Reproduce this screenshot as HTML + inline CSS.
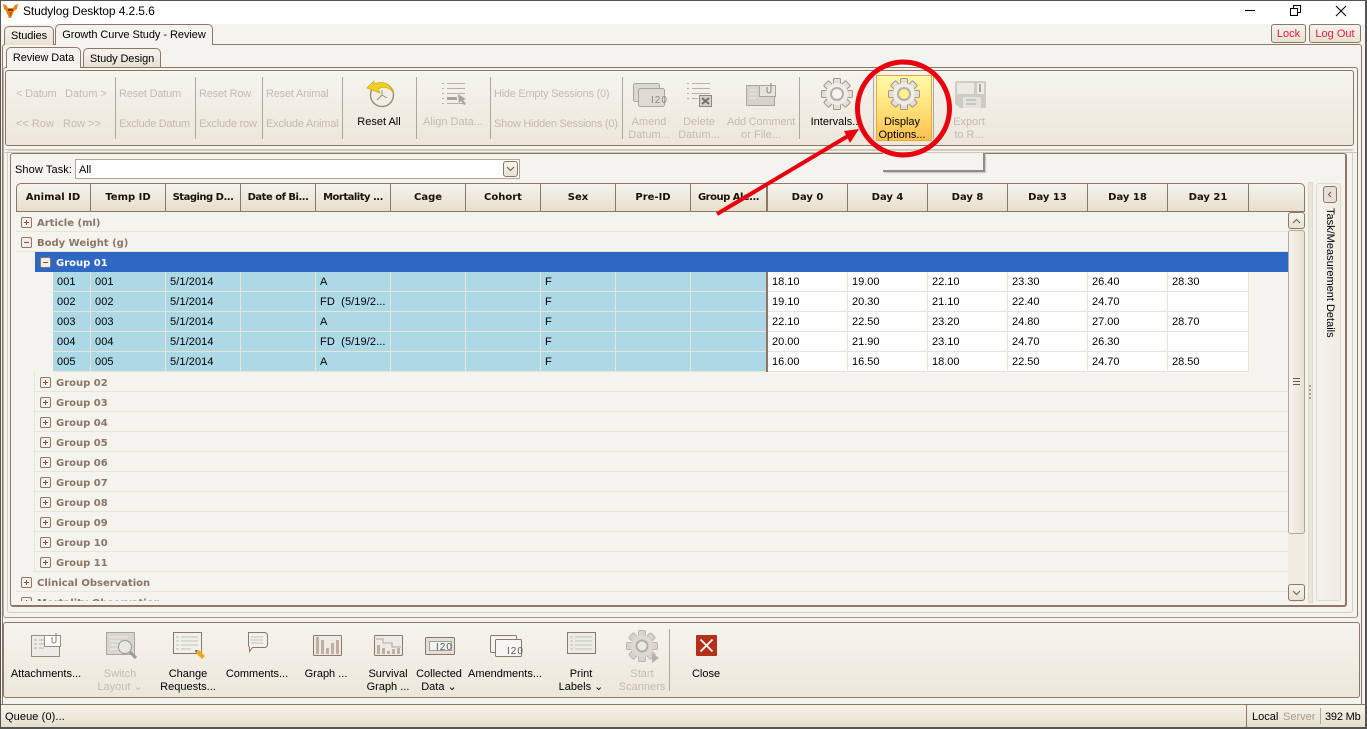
<!DOCTYPE html>
<html><head><meta charset="utf-8"><style>
html,body{margin:0;padding:0;width:1367px;height:729px;overflow:hidden;background:#f5f3ee}
body{position:relative;font:11px/14px "Liberation Sans",sans-serif;color:#000}
.a,.t,svg{position:absolute}
.t{white-space:nowrap;margin-top:1px}
.c{transform:translateX(-50%)}
.d{color:#c2bcb2}
.n{letter-spacing:-.2px}
.sep{position:absolute;width:1px;background:#b3a597}
.tab{position:absolute;box-sizing:border-box;border:1px solid #8e7767;border-bottom:0;border-radius:5px 5px 0 0;text-align:center;line-height:19px;background:linear-gradient(#f6f4ef,#e8e2d2)}
.on{background:#f5f3ee;line-height:21px}
.btn{position:absolute;box-sizing:border-box;border:1px solid #8e7767;border-radius:3px;background:linear-gradient(#f6f4ef,#e8e2d2);color:#f0143c;text-align:center;line-height:19px;font-size:11px}
.box{position:absolute;box-sizing:border-box;border:1px solid #8e7767;border-radius:3px}
.h{position:absolute;top:184px;height:27px;box-sizing:border-box;border-right:1px solid #8e7767;font:bold 10px/27px "DejaVu Sans",sans-serif;text-align:center;color:#1a1208;overflow:hidden;white-space:nowrap}
.e{letter-spacing:-.5px}
.g{position:absolute;height:20px;box-sizing:border-box;border-bottom:1px solid #e7e4da;font:bold 10px/24px "DejaVu Sans",sans-serif;color:#8b7565;white-space:nowrap;overflow:hidden}
.g i{position:absolute;box-sizing:border-box;width:11px;height:11px;top:5px;border:1px solid #8e7767;border-radius:2px;background:#f3efe6}
.g i:before{content:"";position:absolute;left:2px;top:4px;width:5px;height:1px;background:#6b5a4c}
.g i.p:after{content:"";position:absolute;left:4px;top:2px;width:1px;height:5px;background:#6b5a4c}
.row{position:absolute;left:53px;height:20px;width:1196px;white-space:nowrap}
.row span{position:absolute;top:0;height:20px;box-sizing:border-box;padding-left:4px;line-height:20px;border-right:1px solid #e7e4da;border-bottom:1px solid #e7e4da;background:#add8e6;letter-spacing:.1px;overflow:hidden}
.row span.w{background:#fff;padding-left:4px;letter-spacing:0}
.s0{left:0;width:38px}.s1{left:38px;width:75px}.s2{left:113px;width:75px}.s3{left:188px;width:75px}.s4{left:263px;width:75px}.s5{left:338px;width:75px}.s6{left:413px;width:75px}.s7{left:488px;width:75px}.s8{left:563px;width:75px}.s9{left:638px;width:76px}
.w0{left:715px;width:80px}.w1{left:795px;width:80px}.w2{left:875px;width:80px}.w3{left:955px;width:80px}.w4{left:1035px;width:80px}.w5{left:1115px;width:81px}
</style></head><body>
<!-- window frame -->
<div class="a" style="left:0;top:0;width:1367px;height:24px;background:#fff"></div>
<div class="a" style="left:0;top:0;width:1367px;height:1px;background:#555"></div>
<div class="a" style="left:0;top:0;width:1px;height:729px;background:#555"></div>
<div class="a" style="left:1365px;top:0;width:2px;height:729px;background:#555"></div>
<div class="a" style="left:0;top:727px;width:1367px;height:2px;background:#555"></div>
<svg style="left:2px;top:3px" width="17" height="16" viewBox="0 0 17 16"><path d="M1 1l3 1 2 3h5l2-3 3-1-1 5-3 2-3 7h-2L4 8 2 6z" fill="#e8820e"/><path d="M6 6h5v2H6z" fill="#7a3b10"/><path d="M7 9h3l-1 4h-1z" fill="#c9501a"/></svg>
<div class="t" style="left:23px;top:3px;font-size:12px;letter-spacing:-.1px">Studylog Desktop 4.2.5.6</div>
<svg style="left:1240px;top:0" width="125" height="20"><path d="M 5 10.500 H 15" stroke="#000" fill="none"/><path d="M50.500 8.500h7v7h-7zM53.500 8.500v-3h7v7h-3" stroke="#000" fill="none"/><path d="M96 6l10 10M106 6l-10 10" stroke="#000" fill="none"/></svg>

<!-- outer panes -->
<div class="a" style="left:2px;top:44px;width:1360px;height:660px;box-sizing:border-box;border:1px solid #8e7767;border-bottom:0;border-radius:3px 3px 0 0"></div>
<div class="a" style="left:3px;top:67px;width:1355px;height:551px;box-sizing:border-box;border:1px solid #8e7767;border-bottom:1px solid #a89a8b;border-left-color:#b9ab9c;border-radius:3px"></div>
<div class="tab" style="left:4px;top:26px;width:50px;height:19px;letter-spacing:-.1px">Studies</div>
<div class="tab on" style="left:55px;top:24px;width:158px;height:21px;letter-spacing:-.05px">Growth Curve Study - Review</div>
<div class="btn" style="left:1271px;top:24px;width:35px;height:19px">Lock</div>
<div class="btn" style="left:1309px;top:24px;width:52px;height:19px">Log Out</div>
<div class="tab on" style="left:6px;top:47px;width:75px;height:21px;letter-spacing:-.1px">Review Data</div>
<div class="tab" style="left:83px;top:48px;width:78px;height:19px;letter-spacing:-.1px;line-height:20px">Study Design</div>

<!-- top toolbar -->
<div class="box" style="left:5px;top:70px;width:1349px;height:76px;background:linear-gradient(#f6f4ef,#ece7da)"></div>
<div class="a" style="left:5px;top:149px;width:1349px;height:1px;background:#cfc7b8"></div>
<div class="sep" style="left:115px;top:77px;height:62px"></div>
<div class="sep" style="left:195px;top:77px;height:62px"></div>
<div class="sep" style="left:262px;top:77px;height:62px"></div>
<div class="sep" style="left:342px;top:77px;height:62px"></div>
<div class="sep" style="left:416px;top:77px;height:62px"></div>
<div class="sep" style="left:490px;top:77px;height:62px"></div>
<div class="sep" style="left:622px;top:77px;height:62px"></div>
<div class="sep" style="left:799px;top:77px;height:62px"></div>
<div class="sep" style="left:873px;top:77px;height:62px"></div>
<div class="sep" style="left:933px;top:77px;height:62px"></div>
<div class="t d n" style="left:16px;top:86px">&lt; Datum</div>
<div class="t d" style="left:65px;top:86px">Datum &gt;</div>
<div class="t d" style="left:16px;top:116px">&lt;&lt; Row</div>
<div class="t d" style="left:63px;top:116px">Row &gt;&gt;</div>
<div class="t d n" style="left:119px;top:86px">Reset Datum</div>
<div class="t d" style="left:119px;top:116px;letter-spacing:-.3px">Exclude Datum</div>
<div class="t d n" style="left:199px;top:86px">Reset Row</div>
<div class="t d n" style="left:199px;top:116px">Exclude row</div>
<div class="t d n" style="left:266px;top:86px">Reset Animal</div>
<div class="t d n" style="left:266px;top:116px">Exclude Animal</div>
<div class="t c" style="left:379px;top:114px">Reset All</div>
<svg style="left:364px;top:78px" width="32" height="30" viewBox="0 0 32 30"><circle cx="18" cy="17" r="11.500" fill="#f4efe4" stroke="#a08d7d" stroke-width="1.500"/><path d="M18 17V12M18 17l-5 5M18 17l5 3" stroke="#a08d7d" fill="none"/><path d="M3 10l7-7v3c7-3 16-2 19 8-5-5-10-6-15-3l2 4z" fill="#f3d01e" stroke="#c9a514" stroke-width=".7"/></svg>
<svg style="left:441px;top:82px" width="27" height="24" fill="none" stroke="#b8b2a9"><path d="M1 1.500h2M6 1.500h18M1 6.500h2M6 6.500h18M1 11.500h2M6 11.500h18M1 16.500h2M1 21.500h2M6 21.500h18"/><path d="M6 15h10v3H6z" fill="#a8a39b" stroke="none"/><path d="M17 12l8 5-3 1 3 4-2 1-3-4-2 2z" fill="#a8a39b" stroke="none"/></svg>
<div class="t d c" style="left:453px;top:114px">Align Data...</div>
<div class="t d" style="left:494px;top:86px;letter-spacing:-.25px">Hide Empty Sessions (0)</div>
<div class="t d" style="left:494px;top:116px;letter-spacing:-.25px">Show Hidden Sessions (0)</div>
<svg style="left:632px;top:83px" width="35" height="24"><rect x="1.500" y=".5" width="26" height="18" rx="2" fill="#dcd9d3" stroke="#aaa59d"/><rect x="6.500" y="5.500" width="26" height="18" rx="2" fill="#dedbd5" stroke="#aaa59d"/><text x="19" y="20" font-size="10" fill="#8b877f" font-family="Liberation Sans" letter-spacing="1">I20</text></svg>
<div class="t d c" style="left:649px;top:114px">Amend</div><div class="t d c" style="left:649px;top:127px">Datum...</div>
<svg style="left:686px;top:82px" width="27" height="26" fill="none" stroke="#b8b2a9"><path d="M1 1.500h2M6 1.500h18M1 6.500h2M6 6.500h18M1 11.500h2M6 11.500h18M1 16.500h2M6 16.500h6"/><rect x="13.500" y="13.500" width="12" height="11" fill="#d5d2cb" stroke="#8e8a83"/><path d="M16 16l7 6M23 16l-7 6" stroke="#77736c" stroke-width="2"/></svg>
<div class="t d c" style="left:699px;top:114px">Delete</div><div class="t d c" style="left:699px;top:127px">Datum...</div>
<svg style="left:745px;top:82px" width="33" height="25"><rect x="1.500" y="3.500" width="28" height="20" fill="#d6d3cc" stroke="#aaa59d"/><path d="M5 8h6M5 12h6M5 16h6" stroke="#f0eee9"/><rect x="14.500" y="3.500" width="16" height="11" fill="#e6e4df" stroke="#aaa59d"/><path d="M26 1v8a2 2 0 0 1-4 0V5" fill="none" stroke="#88837b"/></svg>
<div class="t d c n" style="left:761px;top:114px">Add Comment</div><div class="t d c" style="left:761px;top:127px">or File...</div>
<div class="a" style="left:876px;top:75px;width:56px;height:66px;box-sizing:border-box;border:1px solid #e8a63c;background:linear-gradient(#fff9a8,#ffe27a 50%,#fdc04e)"></div>
<svg style="left:820px;top:77px" width="34" height="34" viewBox="-17 -17 34 34"><g fill="#e4dfd8" stroke="#a3968a"><rect x="-3.500" y="-15.500" width="7" height="31" rx="1"/><rect x="-3.500" y="-15.500" width="7" height="31" rx="1" transform="rotate(45)"/><rect x="-3.500" y="-15.500" width="7" height="31" rx="1" transform="rotate(90)"/><rect x="-3.500" y="-15.500" width="7" height="31" rx="1" transform="rotate(135)"/></g><circle r="11" fill="#f0ede8"/><circle r="6" fill="#f6f4f0" stroke="#b8aea3" stroke-width="2"/></svg>
<svg style="left:887px;top:77px" width="34" height="34" viewBox="-17 -17 34 34"><g fill="#e4dfd8" stroke="#a3968a"><rect x="-3.500" y="-15.500" width="7" height="31" rx="1"/><rect x="-3.500" y="-15.500" width="7" height="31" rx="1" transform="rotate(45)"/><rect x="-3.500" y="-15.500" width="7" height="31" rx="1" transform="rotate(90)"/><rect x="-3.500" y="-15.500" width="7" height="31" rx="1" transform="rotate(135)"/></g><circle r="11" fill="#f0ede8"/><circle r="6" fill="#fff08a" stroke="#b8aea3" stroke-width="2"/></svg>
<div class="t c" style="left:836px;top:114px">Intervals...</div>
<div class="t c" style="left:902px;top:114px">Display</div><div class="t c" style="left:902px;top:127px">Options...</div>
<svg style="left:954px;top:80px" width="33" height="29"><path d="M1 3a2 2 0 0 1 2-2h27a2 2 0 0 1 2 2v25H6l-5-4z" fill="#cfccc5"/><rect x="3" y="3" width="17" height="11" fill="#ebe9e4"/><rect x="23" y="3" width="7" height="11" fill="#eeece7"/><rect x="25" y="4" width="2" height="8" fill="#aaa69e"/><rect x="9" y="17" width="18" height="11" fill="#e4e2dc"/><path d="M12 20h10M12 24h10" stroke="#aaa69e"/></svg>
<div class="t d c" style="left:969px;top:114px">Export</div><div class="t d c" style="left:969px;top:127px">to R...</div>

<!-- main grid panel -->
<div class="a" style="left:3px;top:152px;width:1354px;height:1px;background:#cfc7b8"></div>
<div class="a" style="left:7px;top:150px;width:1346px;height:463px;box-sizing:border-box;border:1px solid #d5cdbf;border-radius:3px"></div>
<div class="a" style="left:10px;top:153px;width:1337px;height:454px;box-sizing:border-box;border:1px solid #8e7767;border-right-width:2px;border-bottom-width:2px;border-radius:3px;background:#f5f3ee"></div>
<div class="a" style="left:883px;top:153px;width:102px;height:19px;background:#f5f3ee;border-right:2px solid #8c8c8c;border-bottom:2px solid #8c8c8c;box-sizing:border-box;box-shadow:1px 1px 1px #c8c4bc"></div>
<div class="t" style="left:15px;top:162px;letter-spacing:.1px">Show Task:</div>
<div class="a" style="left:75px;top:159px;width:445px;height:20px;box-sizing:border-box;border:1px solid #b3a597;background:#fff"></div>
<div class="t" style="left:79px;top:162px">All</div>
<div class="box" style="left:503px;top:161px;width:15px;height:16px;background:linear-gradient(#f6f4ef,#e8e2d2)"></div>
<svg style="left:506px;top:166px" width="9" height="6" fill="none" stroke="#6b5a4c"><path d="M1 1l3.500 3.500L8 1"/></svg>

<!-- header -->
<div class="a" style="left:16px;top:183px;width:1289px;height:29px;box-sizing:border-box;border:1px solid #8e7767;border-left-width:1px;border-radius:5px 5px 0 0;background:linear-gradient(#f6f4ef,#e6dfcd)"></div>
<div class="h" style="left:16px;width:75px">Animal ID</div>
<div class="h" style="left:91px;width:75px">Temp ID</div>
<div class="h e" style="left:166px;width:75px">Staging D...</div>
<div class="h e" style="left:241px;width:75px">Date of Bi...</div>
<div class="h e" style="left:316px;width:75px">Mortality ...</div>
<div class="h" style="left:391px;width:75px">Cage</div>
<div class="h" style="left:466px;width:75px">Cohort</div>
<div class="h" style="left:541px;width:75px">Sex</div>
<div class="h" style="left:616px;width:75px">Pre-ID</div>
<div class="h e" style="left:691px;width:77px;border-right-width:2px">Group Ale...</div>
<div class="h" style="left:768px;width:80px">Day 0</div>
<div class="h" style="left:848px;width:80px">Day 4</div>
<div class="h" style="left:928px;width:80px">Day 8</div>
<div class="h" style="left:1008px;width:80px">Day 13</div>
<div class="h" style="left:1088px;width:80px">Day 18</div>
<div class="h" style="left:1168px;width:81px">Day 21</div>

<!-- rows -->
<div class="g" style="left:16px;top:212px;width:1272px;padding-left:21px"><i class="p" style="left:5px"></i>Article (ml)</div>
<div class="g" style="left:16px;top:232px;width:1272px;padding-left:21px"><i style="left:5px"></i>Body Weight (g)</div>
<div class="a" style="left:35px;top:252px;width:1253px;height:20px;box-sizing:border-box;border:1px dotted #fff;outline:1px dotted #2d62bd;outline-offset:-1px;background:#2f67c4"></div>
<div class="g" style="left:35px;top:252px;width:1253px;padding-left:21px;color:#fff;border:0"><i style="left:5px"></i>Group 01</div>

<div class="row" style="top:272px"><span class="s0">001</span><span class="s1">001</span><span class="s2">5/1/2014</span><span class="s3"></span><span class="s4">A</span><span class="s5"></span><span class="s6"></span><span class="s7">F</span><span class="s8"></span><span class="s9"></span><span class="w w0">18.10</span><span class="w w1">19.00</span><span class="w w2">22.10</span><span class="w w3">23.30</span><span class="w w4">26.40</span><span class="w w5">28.30</span></div>
<div class="row" style="top:292px"><span class="s0">002</span><span class="s1">002</span><span class="s2">5/1/2014</span><span class="s3"></span><span class="s4">FD&nbsp; (5/19/2...</span><span class="s5"></span><span class="s6"></span><span class="s7">F</span><span class="s8"></span><span class="s9"></span><span class="w w0">19.10</span><span class="w w1">20.30</span><span class="w w2">21.10</span><span class="w w3">22.40</span><span class="w w4">24.70</span><span class="w w5"></span></div>
<div class="row" style="top:312px"><span class="s0">003</span><span class="s1">003</span><span class="s2">5/1/2014</span><span class="s3"></span><span class="s4">A</span><span class="s5"></span><span class="s6"></span><span class="s7">F</span><span class="s8"></span><span class="s9"></span><span class="w w0">22.10</span><span class="w w1">22.50</span><span class="w w2">23.20</span><span class="w w3">24.80</span><span class="w w4">27.00</span><span class="w w5">28.70</span></div>
<div class="row" style="top:332px"><span class="s0">004</span><span class="s1">004</span><span class="s2">5/1/2014</span><span class="s3"></span><span class="s4">FD&nbsp; (5/19/2...</span><span class="s5"></span><span class="s6"></span><span class="s7">F</span><span class="s8"></span><span class="s9"></span><span class="w w0">20.00</span><span class="w w1">21.90</span><span class="w w2">23.10</span><span class="w w3">24.70</span><span class="w w4">26.30</span><span class="w w5"></span></div>
<div class="row" style="top:352px"><span class="s0">005</span><span class="s1">005</span><span class="s2">5/1/2014</span><span class="s3"></span><span class="s4">A</span><span class="s5"></span><span class="s6"></span><span class="s7">F</span><span class="s8"></span><span class="s9"></span><span class="w w0">16.00</span><span class="w w1">16.50</span><span class="w w2">18.00</span><span class="w w3">22.50</span><span class="w w4">24.70</span><span class="w w5">28.50</span></div>
<div class="a" style="left:766px;top:272px;width:2px;height:100px;background:#8e7767"></div>

<div class="a" style="left:34px;top:372px;width:1px;height:200px;background:#e7e4da"></div>
<div class="g" style="left:35px;top:372px;width:1253px;padding-left:21px"><i class="p" style="left:5px"></i>Group 02</div>
<div class="g" style="left:35px;top:392px;width:1253px;padding-left:21px"><i class="p" style="left:5px"></i>Group 03</div>
<div class="g" style="left:35px;top:412px;width:1253px;padding-left:21px"><i class="p" style="left:5px"></i>Group 04</div>
<div class="g" style="left:35px;top:432px;width:1253px;padding-left:21px"><i class="p" style="left:5px"></i>Group 05</div>
<div class="g" style="left:35px;top:452px;width:1253px;padding-left:21px"><i class="p" style="left:5px"></i>Group 06</div>
<div class="g" style="left:35px;top:472px;width:1253px;padding-left:21px"><i class="p" style="left:5px"></i>Group 07</div>
<div class="g" style="left:35px;top:492px;width:1253px;padding-left:21px"><i class="p" style="left:5px"></i>Group 08</div>
<div class="g" style="left:35px;top:512px;width:1253px;padding-left:21px"><i class="p" style="left:5px"></i>Group 09</div>
<div class="g" style="left:35px;top:532px;width:1253px;padding-left:21px"><i class="p" style="left:5px"></i>Group 10</div>
<div class="g" style="left:35px;top:552px;width:1253px;padding-left:21px"><i class="p" style="left:5px"></i>Group 11</div>
<div class="g" style="left:16px;top:572px;width:1272px;padding-left:21px"><i class="p" style="left:5px"></i>Clinical Observation</div>
<div class="g" style="left:16px;top:592px;width:1272px;height:9px;padding-left:21px;border:0"><i class="p" style="left:5px"></i>Mortality Observation</div>

<!-- scrollbar -->
<div class="a" style="left:1288px;top:212px;width:17px;height:390px;background:#f0ece2"></div>
<div class="box" style="left:1288px;top:212px;width:17px;height:17px;background:linear-gradient(#f6f4ef,#e8e2d2)"></div>
<svg style="left:1292px;top:218px" width="9" height="6" fill="none" stroke="#6b5a4c"><path d="M1 5l3.500-3.500L8 5"/></svg>
<div class="box" style="left:1288px;top:230px;width:17px;height:304px;border-color:#b3a597;background:linear-gradient(90deg,#f6f4ef,#e8e2d2)"></div>
<svg style="left:1292px;top:378px" width="9" height="7" stroke="#6b5a4c"><path d="M1 .5h7M1 3.500h7M1 6.500h7"/></svg>
<div class="box" style="left:1288px;top:584px;width:17px;height:17px;background:linear-gradient(#f6f4ef,#e8e2d2)"></div>
<svg style="left:1292px;top:590px" width="9" height="6" fill="none" stroke="#6b5a4c"><path d="M1 1l3.500 3.500L8 1"/></svg>

<!-- side panel -->
<div class="a" style="left:1308px;top:182px;width:5px;height:421px;background:#ebe6da;border:1px solid #e0dacd;box-sizing:border-box"></div>
<svg style="left:1309px;top:385px" width="3" height="14" fill="#a89c8e"><path d="M0 0h2v2H0zM0 4h2v2H0zM0 8h2v2H0zM0 12h2v2H0z"/></svg>
<div class="a" style="left:1316px;top:183px;width:25px;height:418px;box-sizing:border-box;border:1px solid #e0dacd;border-radius:3px;background:linear-gradient(90deg,#f5f3ee,#f0ece2)"></div>
<div class="box" style="left:1323px;top:186px;width:14px;height:17px;background:#e8e0d8"></div>
<svg style="left:1327px;top:191px" width="6" height="7" fill="none" stroke="#6b5a4c"><path d="M4 1L1.500 3.500 4 6"/></svg>
<div class="t" style="left:1322px;top:207px;writing-mode:vertical-rl;line-height:16px">Task/Measurement Details</div>

<!-- bottom toolbar -->
<div class="box" style="left:3px;top:622px;width:1357px;height:76px;background:linear-gradient(#f6f4ef,#ece7da)"></div>
<div class="a" style="left:1px;top:704px;width:1364px;height:23px;box-sizing:border-box;border-top:1px solid #8e7767;background:linear-gradient(#f6f3ec,#e6dfcd)"></div>
<div class="t" style="left:5px;top:709px;letter-spacing:.1px">Queue (0)...</div>
<div class="a" style="left:1246px;top:705px;width:1px;height:22px;background:#8e7767"></div>
<div class="t" style="left:1252px;top:709px">Local</div>
<div class="t d" style="left:1283px;top:709px;color:#a89c8e">Server</div>
<div class="a" style="left:1320px;top:708px;width:1px;height:16px;background:#b3a597"></div>
<div class="t n" style="left:1325px;top:709px">392 Mb</div>

<svg style="left:30px;top:632px" width="32" height="27"><rect x="1.500" y="3.500" width="28" height="21" fill="#ecebe6" stroke="#9c8a7b"/><path d="M4 8h3M4 12h3M4 16h3M9 8h5M9 12h5M9 16h5" stroke="#b7b3aa"/><rect x="14.500" y="3.500" width="16" height="11" fill="#fff" stroke="#9c8a7b"/><path d="M26 1v8a2 2 0 0 1-4 0V5" fill="none" stroke="#8e7767"/></svg>
<div class="t c" style="left:46px;top:666px">Attachments...</div>
<svg style="left:105px;top:631px" width="34" height="30"><rect x="1.500" y="1.500" width="28" height="22" fill="#d9d6cf" stroke="#aaa59d"/><path d="M5 6h18M5 10h10M5 14h8M5 18h8" stroke="#efeee9"/><circle cx="20" cy="16" r="6.500" fill="#e9e7e2" stroke="#999"/><path d="M25 21l6 6" stroke="#999" stroke-width="3"/></svg>
<div class="t d c" style="left:120px;top:666px">Switch</div><div class="t d c" style="left:120px;top:679px">Layout ⌄</div>
<svg style="left:172px;top:631px" width="35" height="30"><rect x="1.500" y="1.500" width="28" height="21" fill="#f2f0eb" stroke="#8e7767"/><path d="M4 6h3M9 6h17M4 10h3M9 10h17M4 14h3M9 14h17M4 18h3M9 18h10" stroke="#c5c1b8"/><path d="M24 22l3-3 6 6-3 3z" fill="#f0a818"/><path d="M23 19l3 0-2 3z" fill="#6b5a4c"/></svg>
<div class="t c" style="left:188px;top:666px">Change</div><div class="t c" style="left:188px;top:679px">Requests...</div>
<svg style="left:245px;top:631px" width="24" height="23"><path d="M3.500 1.500h17l2 2v11l-2 2h-13l-3 4v-4l-1-2v-11z" fill="#f3f1ec" stroke="#8e7767"/><path d="M6 6h12M6 9h12M6 12h12" stroke="#c5c1b8"/></svg>
<div class="t c" style="left:257px;top:666px">Comments...</div>
<svg style="left:312px;top:634px" width="32" height="24"><rect x="1.500" y="1.500" width="28" height="20" rx="1" fill="#ecebe6" stroke="#8e7767"/><path d="M4 3h3v17H4zM9 6h3v14H9zM14 14h3v6h-3zM19 9h3v11h-3zM24 6h3v14h-3z" fill="#c0aea0"/></svg>
<div class="t c" style="left:326px;top:666px">Graph ...</div>
<svg style="left:373px;top:634px" width="32" height="24"><rect x="1.500" y="1.500" width="28" height="20" rx="1" fill="#ecebe6" stroke="#8e7767"/><path d="M3 5h7v4h9v4h9" fill="none" stroke="#b7a797"/><path d="M4 11h3v9H4zM9 14h3v6H9zM14 17h3v3h-3zM19 15h3v5h-3zM24 14h3v6h-3z" fill="#c0aea0"/></svg>
<div class="t c" style="left:388px;top:666px">Survival</div><div class="t c" style="left:388px;top:679px">Graph ...</div>
<svg style="left:424px;top:636px" width="32" height="20"><rect x="1.500" y="1.500" width="29" height="17" rx="1" fill="#e4dfd4" stroke="#8e7767"/><rect x="5.500" y="5.500" width="22" height="9" fill="#eef3f6" stroke="#a5a097"/><text x="12" y="14" font-size="10" fill="#5e5a52" font-family="Liberation Sans" letter-spacing="1">I20</text></svg>
<div class="t c" style="left:439px;top:666px">Collected</div><div class="t c" style="left:439px;top:679px">Data ⌄</div>
<svg style="left:489px;top:635px" width="34" height="23"><rect x="1.500" y=".5" width="26" height="17" rx="1" fill="#f5f3ee" stroke="#8e7767"/><rect x="6.500" y="4.500" width="26" height="17" rx="1" fill="#f6f5f1" stroke="#8e7767"/><text x="18" y="19" font-size="10" fill="#5e5a52" font-family="Liberation Sans" letter-spacing="1">I20</text></svg>
<div class="t c" style="left:505px;top:666px">Amendments...</div>
<svg style="left:566px;top:631px" width="31" height="24"><rect x="1.500" y="1.500" width="28" height="21" fill="#ecebe6" stroke="#8e7767"/><path d="M4 6h3M9 6h17M4 10h3M9 10h17M4 14h3M9 14h17M4 18h3M9 18h17" stroke="#c5c1b8"/></svg>
<div class="t c" style="left:581px;top:666px">Print</div><div class="t c" style="left:581px;top:679px">Labels ⌄</div>
<svg style="left:625px;top:629px" width="34" height="34" viewBox="-17 -17 34 34"><g fill="#d6d3cd" stroke="#bbb8b1"><rect x="-3.500" y="-15.500" width="7" height="31" rx="1"/><rect x="-3.500" y="-15.500" width="7" height="31" rx="1" transform="rotate(45)"/><rect x="-3.500" y="-15.500" width="7" height="31" rx="1" transform="rotate(90)"/><rect x="-3.500" y="-15.500" width="7" height="31" rx="1" transform="rotate(135)"/></g><circle r="11" fill="#dcd9d3"/><circle r="5.500" fill="#eceae5" stroke="#b3b0a9" stroke-width="2"/><path d="M10 7l7 5-7 5z" fill="#b3b0a9"/></svg>
<div class="t d c" style="left:642px;top:666px">Start</div><div class="t d c" style="left:642px;top:679px">Scanners</div>
<div class="sep" style="left:669px;top:629px;height:62px"></div>
<svg style="left:696px;top:635px" width="22" height="22"><rect width="21" height="21" rx="1" fill="#b3321a"/><path d="M4.500 4.500l12 12M16.500 4.500l-12 12" stroke="#fff" stroke-width="1.800"/></svg>
<div class="t c" style="left:706px;top:666px">Close</div>

<!-- annotations -->
<svg style="left:0;top:0;pointer-events:none" width="1367" height="729"><ellipse cx="903.500" cy="108.500" rx="46" ry="46.500" fill="none" stroke="#e8000f" stroke-width="5"/><path d="M717 214L848 136" stroke="#e8000f" stroke-width="4" fill="none"/><path d="M859 129L844 131L850 143z" fill="#e8000f"/></svg>
</body></html>
